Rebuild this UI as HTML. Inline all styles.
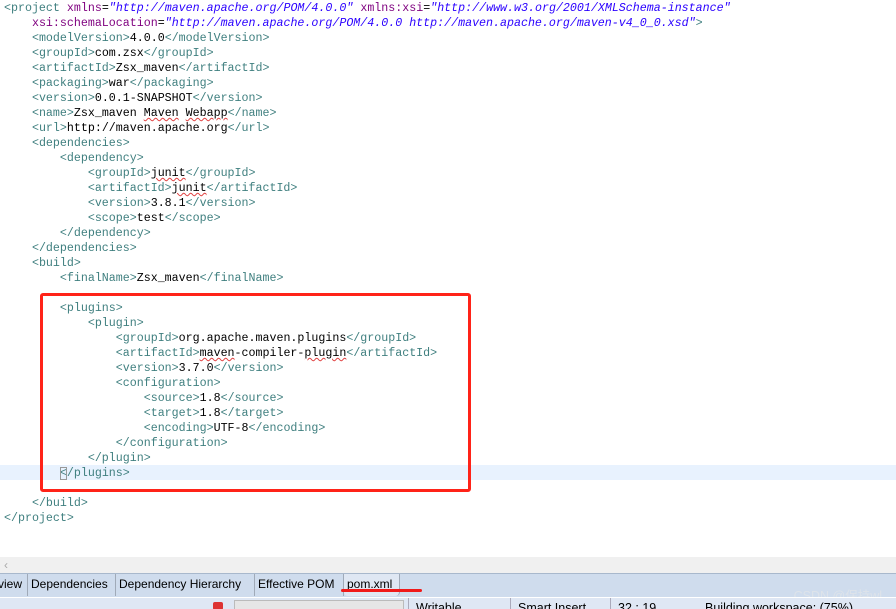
<!DOCTYPE html>
<html><head><meta charset="utf-8"><style>
*{margin:0;padding:0;box-sizing:border-box}
body{width:896px;height:609px;overflow:hidden;background:#fff;position:relative;font-family:"Liberation Mono",monospace}
.code{position:absolute;left:4px;top:1px;font-size:11.65px;line-height:15px;white-space:pre;color:#000}
.t{color:#3f7f7f}.a{color:#7f007f}.v{color:#2a00ff;font-style:italic}
.sq{text-decoration:underline wavy #e04040;text-decoration-thickness:1px}
.hl{position:absolute;left:0;top:465px;width:896px;height:15px;background:#e8f2fe}
.box{position:absolute;left:40px;top:293px;width:431px;height:199px;border:3px solid #ff2318;border-radius:3px}
.scroll{position:absolute;left:0;top:557px;width:896px;height:16px;background:#f0f0f0;color:#aaa;font:12px "Liberation Sans",sans-serif;padding-left:4px;line-height:16px}
.tabs{position:absolute;left:0;top:573px;width:896px;height:24px;background:#cfdced;border-top:1px solid #a8b8cc;font:12px "Liberation Sans",sans-serif}
.tab{position:absolute;top:0;height:22px;line-height:20px;border-right:1px solid #a0aab8;color:#000;padding-left:3px}
.status{position:absolute;left:0;top:597px;width:896px;height:12px;background:#dfe7f4;font:12.5px "Liberation Sans",sans-serif;border-top:1px solid #fff;overflow:hidden}
.st{position:absolute;top:2px;line-height:16px}
</style></head><body>
<div class="hl"></div>
<div class="code"><span class="t">&lt;project</span> <span class="a">xmlns</span>=<span class="v">"http://maven.apache.org/POM/4.0.0"</span> <span class="a">xmlns:xsi</span>=<span class="v">"http://www.w3.org/2001/XMLSchema-instance"</span>
    <span class="a">xsi:schemaLocation</span>=<span class="v">"http://maven.apache.org/POM/4.0.0 http://maven.apache.org/maven-v4_0_0.xsd"</span><span class="t">&gt;</span>
    <span class="t">&lt;modelVersion&gt;</span>4.0.0<span class="t">&lt;/modelVersion&gt;</span>
    <span class="t">&lt;groupId&gt;</span>com.zsx<span class="t">&lt;/groupId&gt;</span>
    <span class="t">&lt;artifactId&gt;</span>Zsx_maven<span class="t">&lt;/artifactId&gt;</span>
    <span class="t">&lt;packaging&gt;</span>war<span class="t">&lt;/packaging&gt;</span>
    <span class="t">&lt;version&gt;</span>0.0.1-SNAPSHOT<span class="t">&lt;/version&gt;</span>
    <span class="t">&lt;name&gt;</span>Zsx_maven <span class="sq">Maven</span> <span class="sq">Webapp</span><span class="t">&lt;/name&gt;</span>
    <span class="t">&lt;url&gt;</span>http://maven.apache.org<span class="t">&lt;/url&gt;</span>
    <span class="t">&lt;dependencies&gt;</span>
        <span class="t">&lt;dependency&gt;</span>
            <span class="t">&lt;groupId&gt;</span><span class="sq">junit</span><span class="t">&lt;/groupId&gt;</span>
            <span class="t">&lt;artifactId&gt;</span><span class="sq">junit</span><span class="t">&lt;/artifactId&gt;</span>
            <span class="t">&lt;version&gt;</span>3.8.1<span class="t">&lt;/version&gt;</span>
            <span class="t">&lt;scope&gt;</span>test<span class="t">&lt;/scope&gt;</span>
        <span class="t">&lt;/dependency&gt;</span>
    <span class="t">&lt;/dependencies&gt;</span>
    <span class="t">&lt;build&gt;</span>
        <span class="t">&lt;finalName&gt;</span>Zsx_maven<span class="t">&lt;/finalName&gt;</span>

        <span class="t">&lt;plugins&gt;</span>
            <span class="t">&lt;plugin&gt;</span>
                <span class="t">&lt;groupId&gt;</span>org.apache.maven.plugins<span class="t">&lt;/groupId&gt;</span>
                <span class="t">&lt;artifactId&gt;</span><span class="sq">maven</span>-compiler-<span class="sq">plugin</span><span class="t">&lt;/artifactId&gt;</span>
                <span class="t">&lt;version&gt;</span>3.7.0<span class="t">&lt;/version&gt;</span>
                <span class="t">&lt;configuration&gt;</span>
                    <span class="t">&lt;source&gt;</span>1.8<span class="t">&lt;/source&gt;</span>
                    <span class="t">&lt;target&gt;</span>1.8<span class="t">&lt;/target&gt;</span>
                    <span class="t">&lt;encoding&gt;</span>UTF-8<span class="t">&lt;/encoding&gt;</span>
                <span class="t">&lt;/configuration&gt;</span>
            <span class="t">&lt;/plugin&gt;</span>
        <span class="t" style="outline:1px solid #999;outline-offset:-1px">&lt;</span><span class="t">/plugins&gt;</span>

    <span class="t">&lt;/build&gt;</span>
<span class="t">&lt;/project&gt;</span></div>
<div class="box"></div>
<div class="scroll">‹</div>
<div class="tabs">
<div class="tab" style="left:-4px;width:32px;padding-left:2px">view</div>
<div class="tab" style="left:28px;width:88px">Dependencies</div>
<div class="tab" style="left:116px;width:139px">Dependency Hierarchy</div>
<div class="tab" style="left:255px;width:89px">Effective POM</div>
<div class="tab" style="left:344px;width:56px;background:#dfe7f3;border-radius:0 0 4px 4px">pom.xml</div>
<div style="position:absolute;left:341px;top:15px;width:81px;height:3px;background:#f01a1a;border-radius:2px"></div>
<div style="position:absolute;right:14px;top:11px;color:#dde3ea;font-size:12.5px;font-family:'Liberation Sans','Noto Sans CJK SC',sans-serif">CSDN @保持wl</div>
</div>
<div class="status">
<div style="position:absolute;left:213px;top:4px;width:10px;height:8px;background:#d33;border-radius:2px"></div>
<div style="position:absolute;left:234px;top:2px;width:170px;height:10px;background:#e6e6e6;border:1px solid #bbb"></div>
<div style="position:absolute;left:408px;top:0;width:1px;height:12px;background:#aab"></div>
<div class="st" style="left:416px">Writable</div>
<div style="position:absolute;left:510px;top:0;width:1px;height:12px;background:#aab"></div>
<div class="st" style="left:518px">Smart Insert</div>
<div style="position:absolute;left:610px;top:0;width:1px;height:12px;background:#aab"></div>
<div class="st" style="left:618px">32 : 19</div>
<div class="st" style="left:705px">Building workspace: (75%)</div>
</div>
</body></html>
